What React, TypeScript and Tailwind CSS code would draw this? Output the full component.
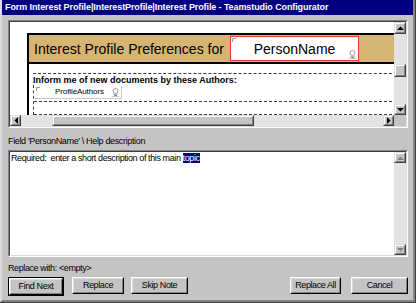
import React from "react";

type Dir = "up" | "down" | "left" | "right";

const Arrow = ({ dir, color = "#000" }: { dir: Dir; color?: string }) => {
  if (dir === "up")
    return (
      <svg width="7" height="4" viewBox="0 0 7 4">
        <polygon points="0,4 7,4 3.5,0.5" fill={color} />
      </svg>
    );
  if (dir === "down")
    return (
      <svg width="7" height="4" viewBox="0 0 7 4">
        <polygon points="0,0 7,0 3.5,3.5" fill={color} />
      </svg>
    );
  if (dir === "left")
    return (
      <svg width="4" height="7" viewBox="0 0 4 7">
        <polygon points="4,0 4,7 0.5,3.5" fill={color} />
      </svg>
    );
  return (
    <svg width="4" height="7" viewBox="0 0 4 7">
      <polygon points="0,0 0,7 3.5,3.5" fill={color} />
    </svg>
  );
};

const Raised = ({ className, children }: { className: string; children?: React.ReactNode }) => (
  <div
    className={`bg-[#c6c3c6] border border-t-[#dedbde] border-l-[#dedbde] border-r-[#424142] border-b-[#424142] ${className}`}
  >
    <div className="w-full h-full border border-t-white border-l-white border-r-[#848284] border-b-[#848284] flex items-center justify-center">
      {children}
    </div>
  </div>
);

const Corner = () => (
  <svg width="4" height="4" viewBox="0 0 4 4" className="absolute left-[1px] top-[1px]">
    <path d="M0.5 4V0.5H4" stroke="#9a9a9a" fill="none" />
  </svg>
);

const FieldIcon = ({ className }: { className: string }) => (
  <svg width="9" height="10" viewBox="0 0 9 10" className={className}>
    <circle cx="4.5" cy="4" r="2.5" stroke="#9a9a9a" fill="none" />
    <path d="M2 7.5H7L4.5 9.8Z" fill="#7a7a7a" />
    <path d="M0.5 9.5H8.5" stroke="#c8c8c8" />
  </svg>
);

const Button = ({ label, className }: { label: string; className: string }) => (
  <div
    className={`h-[17px] border border-t-white border-l-white border-r-black border-b-black bg-[#c6c3c6] ${className}`}
  >
    <div className="w-full h-full border border-t-[#dedbde] border-l-[#dedbde] border-r-[#848284] border-b-[#848284] flex items-center justify-center text-[9px] tracking-[-0.4px] text-black">
      {label}
    </div>
  </div>
);

export default function App() {
  return (
    <div className="w-[416px] h-[303px] bg-[#c6c3c6] border-r border-b border-[#424142] font-['Liberation_Sans',Arial,sans-serif] text-black">
      <div className="w-full h-full flex flex-col border-l-2 border-l-[#dedbde] border-r-2 border-r-[#848284] border-b-2 border-b-[#848284]">
        {/* Title bar */}
        <div className="h-[15px] bg-[#000080] text-white font-bold text-[9px] leading-[15px] pl-[3px] tracking-[-0.1px] whitespace-nowrap overflow-hidden">
          Form Interest Profile|InterestProfile|Interest Profile - Teamstudio Configurator
        </div>

        <div className="flex-1 flex flex-col pl-[6px] pr-[5px]">
          {/* Preview pane */}
          <div className="mt-[5px] h-[108px] border border-t-[#848284] border-l-[#848284] border-r-white border-b-white">
            <div className="w-full h-full border border-t-[#424142] border-l-[#424142] border-r-[#dedbde] border-b-[#dedbde] flex flex-col">
              <div className="h-[93px] flex">
                <div className="flex-1 bg-white overflow-hidden">
                  <div className="ml-[17px] mt-[11px] w-[420px] border-l-2 border-t-2 border-black">
                    <div className="h-[29px] bg-[#d6b573] border-b-2 border-black flex items-center">
                      <div className="w-[201px] pl-[5px] text-[14px] leading-[16px] whitespace-nowrap">
                        Interest Profile Preferences for
                      </div>
                      <div className="relative w-[129px] h-[25px] bg-white border border-[#e03a3a] flex items-center justify-center text-[14px] leading-[16px]">
                        <Corner />
                        PersonName
                        <FieldIcon className="absolute right-[1px] bottom-[1px]" />
                      </div>
                    </div>
                    <div className="pl-[4px]">
                      <div className="mt-[9px] border-t border-dashed border-[#3a3a3a]" />
                      <div className="pt-[1px] h-[11px] text-[9px] leading-[10px] font-bold whitespace-nowrap">
                        Inform me of new documents by these Authors:
                      </div>
                      <div className="border-l border-dashed border-[#3a3a3a]">
                        <div className="pt-[1px] pb-[2px] pl-[1px] border-b border-dashed border-[#3a3a3a]">
                          <div className="relative w-[87px] h-[13px] border-b border-r border-[#c8c8c8] text-[8px] leading-[12px] pl-[20px] tracking-[-0.1px] whitespace-nowrap">
                            <Corner />
                            ProfileAuthors
                            <FieldIcon className="absolute right-[1px] top-[1px]" />
                          </div>
                        </div>
                        <div className="h-[13px] border-b border-dashed border-[#3a3a3a]" />
                      </div>
                    </div>
                  </div>
                </div>
                {/* vertical scrollbar */}
                <div className="w-[12px] flex flex-col bg-[#e4e2e4]">
                  <Raised className="h-[12px] w-[12px]">
                    <Arrow dir="up" />
                  </Raised>
                  <div className="h-[30px]" />
                  <Raised className="h-[13px] w-[12px]" />
                  <div className="flex-1" />
                  <Raised className="h-[11px] w-[12px]">
                    <Arrow dir="down" />
                  </Raised>
                </div>
              </div>
              <div className="h-[11px] flex">
                <div className="flex-1 flex bg-[#e4e2e4]">
                  <Raised className="w-[11px] h-[11px]">
                    <Arrow dir="left" />
                  </Raised>
                  <div className="w-[31px]" />
                  <Raised className="w-[202px] h-[11px]" />
                  <div className="flex-1" />
                  <Raised className="w-[11px] h-[11px]">
                    <Arrow dir="right" />
                  </Raised>
                </div>
                <div className="w-[12px] bg-[#c6c3c6]" />
              </div>
            </div>
          </div>

          {/* Field label */}
          <div className="mt-[6px] h-[14px] leading-[14px] text-[9px] tracking-[-0.35px] whitespace-nowrap">
            Field 'PersonName' \ Help description
          </div>

          {/* Text area */}
          <div className="mt-[2px] h-[107px] border border-t-[#848284] border-l-[#848284] border-r-white border-b-white">
            <div className="w-full h-full border border-t-[#424142] border-l-[#424142] border-r-[#dedbde] border-b-[#dedbde] flex">
              <div className="flex-1 bg-white pl-[1px] pt-[1px] text-[9px] leading-[10px] tracking-[-0.4px] whitespace-nowrap">
                Required:&nbsp; enter a short description of this main{" "}
                <span className="bg-[#000080] text-white">topic</span>
              </div>
              <div className="w-[12px] flex flex-col bg-[#e4e2e4]">
                <Raised className="h-[11px] w-[12px]">
                  <Arrow dir="up" color="#848284" />
                </Raised>
                <div className="flex-1" />
                <Raised className="h-[11px] w-[12px]">
                  <Arrow dir="down" color="#848284" />
                </Raised>
              </div>
            </div>
          </div>

          {/* Replace with */}
          <div className="mt-[4px] h-[14px] leading-[14px] text-[9px] tracking-[-0.4px] whitespace-nowrap">
            Replace with: &lt;empty&gt;
          </div>

          {/* Buttons */}
          <div className="mt-[2px] flex">
            <div className="border border-black">
              <Button label="Find Next" className="w-[54px] h-[15px]" />
            </div>
            <Button label="Replace" className="ml-[8px] w-[52px]" />
            <Button label="Skip Note" className="ml-[7px] w-[57px]" />
            <div className="flex-1" />
            <Button label="Replace All" className="w-[51px]" />
            <Button label="Cancel" className="ml-[10px] w-[57px]" />
          </div>
        </div>
      </div>
    </div>
  );
}
